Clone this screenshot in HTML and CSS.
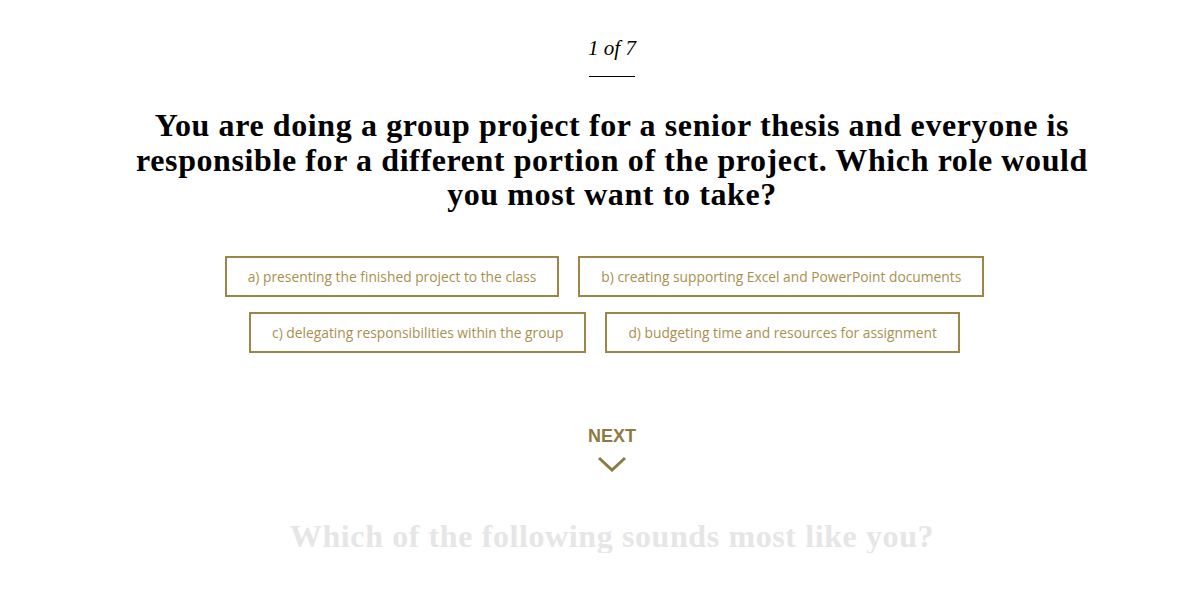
FILE: index.html
```html
<!DOCTYPE html>
<html lang="en">
<head>
<meta charset="UTF-8" />
<meta name="viewport" content="width=device-width, initial-scale=1" />
<title>Quiz</title>
<link rel="stylesheet" href="styles.css">
</head>
<body>

<div class="quiz">

  <div class="counter">1 of 7</div>
  <div class="rule"></div>

  <h1 class="question">You are doing a group project for a senior thesis and everyone is responsible for a different portion of the project. Which role would you most want to take?</h1>

  <div class="answers">
    <div class="row">
      <div class="answer">a) presenting the finished project to the class</div>
      <div class="answer">b) creating supporting Excel and PowerPoint documents</div>
    </div>
    <div class="row">
      <div class="answer">c) delegating responsibilities within the group</div>
      <div class="answer">d) budgeting time and resources for assignment</div>
    </div>
  </div>

  <div class="next">
    <div class="next-label">NEXT</div>
    <svg class="chevron" width="30" height="16" viewBox="0 0 30 16">
      <polyline points="2,2 15,14 28,2" fill="none" stroke="#8b7a41" stroke-width="3" />
    </svg>
  </div>

  <h2 class="question upcoming">Which of the following sounds most like you?</h2>

</div>

</body>
</html>
```

FILE: styles.css
```css
body {
  margin: 0;
  background: #fff;
  color: #000;
}
.quiz {
  padding: 36px 0 0 23px;
  text-align: center;
}
.counter {
  font-family: "Liberation Serif", serif;
  font-style: italic;
  font-size: 21px;
  line-height: 24px;
  white-space: nowrap;
}
.rule {
  width: 46px;
  height: 1px;
  margin: 16px auto 0;
  background: #000;
}
.question {
  font-family: "Liberation Serif", serif;
  font-weight: bold;
  font-size: 32px;
  letter-spacing: 0.6px;
  line-height: 34.5px;
  margin: 31px auto 0;
  width: 990px;
}
.answers {
  margin-top: 44px;
}
.row {
  margin-bottom: 15px;
}
.answer {
  display: inline-block;
  margin-right: 15px;
  border: 2px solid #9b8648;
  padding: 0 21px;
  height: 37px;
  line-height: 37px;
  font-family: "Open Sans", sans-serif;
  font-size: 13.8px;
  color: #a8904f;
  cursor: pointer;
}
.next {
  margin-top: 73px;
}
.next-label {
  font-family: "Liberation Sans", Arial, sans-serif;
  font-weight: bold;
  font-size: 18px;
  color: #8b7a41;
  line-height: 20px;
}
.chevron {
  display: block;
  margin: 10px auto 0;
}
.upcoming {
  color: #e6e6e6;
  margin-top: 47px;
}
```
